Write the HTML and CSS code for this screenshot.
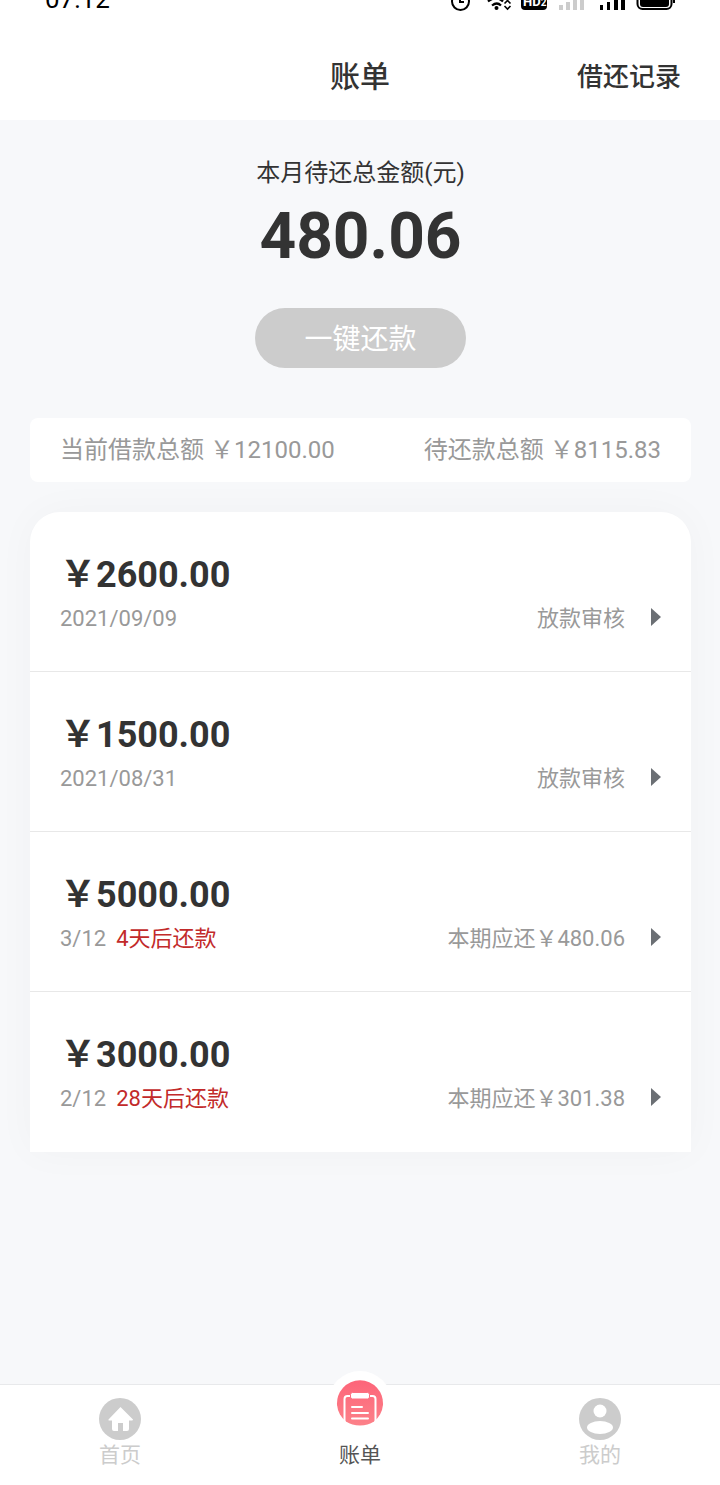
FILE: index.html
```html
<!DOCTYPE html>
<html lang="zh-CN">
<head>
<meta charset="utf-8">
<meta name="viewport" content="width=device-width, initial-scale=1">
<title>账单</title>
<link rel="stylesheet" href="styles.css">
</head>
<body>
<div class="app">
  <div class="status">
    <span class="status-time">07:12</span>
    <svg class="status-icons" width="228" height="12" viewBox="448 0 228 12" aria-hidden="true">
      <circle cx="460.500" cy="1.500" r="8.500" fill="none" stroke="#000" stroke-width="2"/>
      <path d="M460 -4V2H464" fill="none" stroke="#000" stroke-width="2"/>
      <path d="M488 1.500Q496 -5 503 1.500M492 5.500Q497 1.500 501 5.500" fill="none" stroke="#000" stroke-width="2.200"/>
      <circle cx="496.500" cy="8" r="2" fill="#000"/>
      <path d="M504.500 3.500L507.500 .5L510.500 3.500M504.500 6L507.500 9L510.500 6" fill="none" stroke="#000" stroke-width="1.600"/>
      <rect x="521" y="-10" width="26" height="20" rx="4" fill="#000"/>
      <text class="hd" x="523" y="6">HD<tspan class="hd-sub">2</tspan></text>
      <path d="M559 5h4v5h-4zM566 2h4v8h-4zM573 -2h4v12h-4zM580 -6h4v16h-4z" fill="#ccc"/>
      <path d="M600 5h3v5h-3zM607 2h3v8h-3zM614 -2h4v12h-4zM621 -6h4v16h-4z" fill="#000"/>
      <rect x="637.500" y="-10" width="34" height="19" rx="5" fill="#fff" stroke="#000" stroke-width="2"/>
      <rect x="640" y="-8" width="29" height="15" rx="3" fill="#000"/>
      <rect x="673" y="-4" width="2" height="7" fill="#000"/>
    </svg>
  </div>
  <header class="header">
    <h1 class="title">账单</h1>
    <a class="records" href="#">借还记录</a>
  </header>

  <main class="main">
    <section class="due">
      <p class="due-label">本月待还总金额(元)</p>
      <p class="due-amount">480.06</p>
      <button class="pay" type="button">一键还款</button>
    </section>

    <section class="summary">
      <span>当前借款总额 &#65509;12100.00</span>
      <span>待还款总额 &#65509;8115.83</span>
    </section>

    <ul class="bills">
      <li><a class="bill" href="#">
        <strong class="bill-amount">&#65509;2600.00</strong>
        <span class="bill-info"><span>2021/09/09</span><span class="bill-state">放款审核</span><svg class="arrow" viewBox="0 0 10 18" aria-hidden="true"><path d="M0 0L10 9L0 18Z"/></svg></span>
      </a></li>
      <li><a class="bill" href="#">
        <strong class="bill-amount">&#65509;1500.00</strong>
        <span class="bill-info"><span>2021/08/31</span><span class="bill-state">放款审核</span><svg class="arrow" viewBox="0 0 10 18" aria-hidden="true"><path d="M0 0L10 9L0 18Z"/></svg></span>
      </a></li>
      <li><a class="bill" href="#">
        <strong class="bill-amount">&#65509;5000.00</strong>
        <span class="bill-info"><span>3/12</span><span class="soon">4天后还款</span><span class="bill-state">本期应还&#65509;480.06</span><svg class="arrow" viewBox="0 0 10 18" aria-hidden="true"><path d="M0 0L10 9L0 18Z"/></svg></span>
      </a></li>
      <li><a class="bill" href="#">
        <strong class="bill-amount">&#65509;3000.00</strong>
        <span class="bill-info"><span>2/12</span><span class="soon">28天后还款</span><span class="bill-state">本期应还&#65509;301.38</span><svg class="arrow" viewBox="0 0 10 18" aria-hidden="true"><path d="M0 0L10 9L0 18Z"/></svg></span>
      </a></li>
    </ul>
  </main>

  <nav class="tabs">
    <a class="tab" href="#">
      <svg class="tab-icon" viewBox="0 0 42 42" aria-hidden="true"><circle cx="21" cy="21" r="21" fill="#ccc"/><path d="M21.500 9L34 21.500Q34 22.500 33 22.500H30V31Q30 33 28 33H24V25H19V33H15Q13 33 13 31V22.500H10Q9 22.500 9.500 21.500Z" fill="#fff"/></svg>
      首页
    </a>
    <a class="tab tab-active" href="#" aria-current="page">
      <svg class="tab-badge" viewBox="0 0 64 64" aria-hidden="true">
        <defs><linearGradient id="coral" x1="0" y1="0" x2="0" y2="1"><stop offset="0" stop-color="#fd6579"/><stop offset="1" stop-color="#fc8189"/></linearGradient></defs>
        <circle cx="32" cy="32" r="32" fill="#fff"/>
        <path d="M18 50.500A23 23 0 1 1 46 50.500Q40 54.500 32 54.500Q24 54.500 18 50.500Z" fill="url(#coral)"/>
        <path d="M16.500 51V28Q16.500 25 19.500 25H44.500Q47.500 25 47.500 28V51" fill="none" stroke="#fff" stroke-width="2"/>
        <rect x="22.500" y="21.500" width="19" height="6.500" rx="2" fill="#fff" stroke="#fd7080"/>
        <path d="M24 36H34M24 42H40M24 47.500H40" stroke="#fff" stroke-width="2" stroke-linecap="round"/>
      </svg>
      账单
    </a>
    <a class="tab" href="#">
      <svg class="tab-icon" viewBox="0 0 42 42" aria-hidden="true"><circle cx="21" cy="21" r="21" fill="#ccc"/><circle cx="21" cy="13" r="6.500" fill="#fff"/><ellipse cx="21" cy="29.500" rx="13" ry="6.500" fill="#fff"/></svg>
      我的
    </a>
  </nav>
</div>
</body>
</html>
```

FILE: styles.css
```css
* { box-sizing: border-box; }

body {
  margin: 0;
  background: #f7f8fa;
  color: #333;
  font-family: Roboto, "Noto Sans CJK SC", sans-serif;
}

h1, p, ul { margin: 0; padding: 0; }
ul { list-style: none; }
a { color: inherit; text-decoration: none; }

.app {
  display: flex;
  flex-direction: column;
  min-height: 100vh;
}

.status {
  display: flex;
  justify-content: space-between;
  align-items: flex-end;
  height: 12px;
  padding: 0 44px 0 45px;
  overflow: hidden;
  background: #fff;
  color: #000;
}
.status-time { font-size: 26px; line-height: 26px; }
.hd { fill: #fff; font-size: 13px; font-weight: 700; }
.hd-sub { font-size: 10px; }

.header {
  display: grid;
  grid-template-columns: 1fr auto 1fr;
  align-items: center;
  height: 108px;
  padding: 22px 39px 0;
  background: #fff;
}
.title { grid-column: 2; font-size: 30px; line-height: 44px; font-weight: 500; }
.records { justify-self: end; font-size: 26px; line-height: 40px; font-weight: 500; }

.main { flex: 1; padding: 35px 29px 0 30px; }

.due {
  display: flex;
  flex-direction: column;
  align-items: center;
}
.due-label { font-size: 24px; line-height: 36px; }
.due-amount { font-size: 64px; line-height: 76px; font-weight: 700; padding-top: 8px; }
.pay {
  margin-top: 33px;
  padding: 4px 49px 0;
  border: 0;
  border-radius: 30px;
  background: #ccc;
  color: #fff;
  font: inherit;
  font-size: 28px;
  line-height: 56px;
}

.summary {
  position: relative;
  z-index: 1;
  display: flex;
  justify-content: space-between;
  margin-top: 50px;
  padding: 0 30px;
  border-radius: 8px;
  background: #fff;
  color: #999;
  font-size: 24px;
  line-height: 64px;
}

.bills {
  margin-top: 30px;
  border-radius: 30px 30px 0 0;
  background: #fff;
  box-shadow: 0 0 40px rgba(0, 0, 0, 0.03);
}
.bill {
  display: block;
  height: 160px;
  padding: 38px 30px 0;
  border-bottom: 1px solid #e8e8e8;
}
li:last-child .bill { border-bottom: 0; }
.bill-amount { display: block; font-size: 36px; line-height: 50px; }
.bill-info {
  display: flex;
  align-items: flex-start;
  gap: 10px;
  color: #999;
  font-size: 22px;
  line-height: 38px;
}
.soon { color: #c22a2a; }
.bill-state { margin-left: auto; margin-right: 16px; }
.arrow { width: 10px; height: 18px; margin-top: 8px; fill: #6b6f74; }

.tabs {
  display: grid;
  grid-template-columns: repeat(3, 1fr);
  height: 101px;
  border-top: 1px solid #e8e9eb;
  background: #fff;
}
.tab {
  position: relative;
  display: flex;
  flex-direction: column;
  align-items: center;
  padding-top: 13px;
  color: #ccc;
  font-size: 21px;
  line-height: 30px;
}
.tab-icon { width: 42px; height: 42px; }
.tab-active { padding-top: 55px; color: #555; }
.tab-badge {
  position: absolute;
  top: -14px;
  width: 64px;
  height: 64px;
}
```
